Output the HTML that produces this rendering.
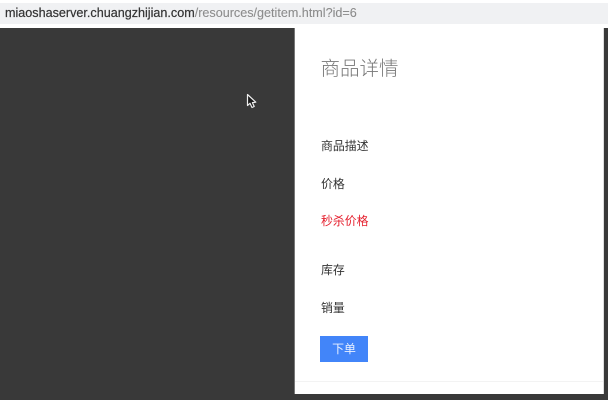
<!DOCTYPE html>
<html lang="zh">
<head>
<meta charset="utf-8">
<style>
html,body{margin:0;padding:0;width:608px;height:400px;overflow:hidden;background:#393939}
body{position:relative;font-family:"Liberation Sans","Noto Sans CJK SC",sans-serif}
div{position:absolute;white-space:nowrap}
.top{left:0;top:0;width:608px;height:28px;background:#fff}
.bar{left:0;top:3px;width:608px;height:21px;background:#f0f1f3}
.url{left:5px;top:3px;height:21px;line-height:21px;font-size:12.6px;color:#333;-webkit-text-stroke:.2px #333;filter:blur(.25px)}
.url span{color:#8c8c8c;-webkit-text-stroke:.1px #8c8c8c}
.panel{left:295px;top:28px;width:308px;height:366px;background:#fff;box-shadow:-1px 0 0 #777,1px 0 0 #ddd}
.sep{left:295px;top:381px;width:308px;height:1px;background:#f3f3f3}
.title{left:320.5px;top:56px;font-size:19.5px;line-height:26px;color:#777;font-weight:300;filter:blur(.25px)}
.l{left:321px;font-size:11.9px;line-height:16px;color:#333;filter:blur(.25px)}
.btn{left:320px;top:336px;width:48px;height:26px;background:#4285f9;color:#e8f0ff;font-size:11.9px;line-height:27px;text-align:center}
</style>
</head>
<body>
<div class="top"></div>
<div class="bar"></div>
<div class="url">miaoshaserver.chuangzhijian.com<span>/resources/getitem.html?id=6</span></div>
<div class="panel"></div>
<div class="sep"></div>
<div class="title">商品详情</div>
<div class="l" style="top:138px">商品描述</div>
<div class="l" style="top:176px">价格</div>
<div class="l" style="top:213px;color:#e5202e">秒杀价格</div>
<div class="l" style="top:262px">库存</div>
<div class="l" style="top:300px">销量</div>
<div class="btn">下单</div>
<svg style="position:absolute;left:245px;top:93px" width="14" height="17" viewBox="0 0 14 17">
<path d="M2.5 1.5 L2.5 12.5 L5 10.3 L7 14.5 L9.2 13.5 L7.4 9.6 L10.8 9.2 Z" fill="#1c1c1c" stroke="#eee" stroke-width="1.2" stroke-linejoin="round"/>
</svg>
</body>
</html>
